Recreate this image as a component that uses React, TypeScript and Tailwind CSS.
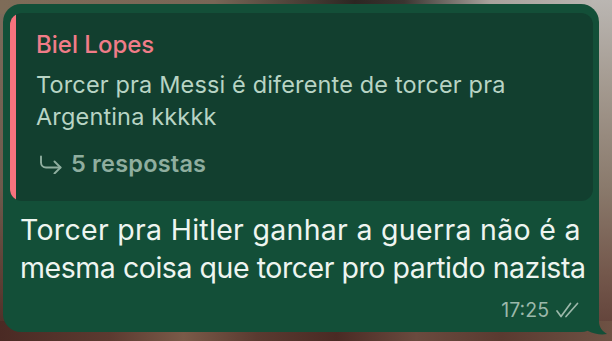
import React from 'react'

function ReplyArrow() {
  return (
    <svg width="23" height="19" viewBox="0 0 23 19" fill="none" stroke="currentColor" strokeWidth="1.9" strokeLinecap="round" strokeLinejoin="round">
      <path d="M2 1.5v6a5 5 0 0 0 5 5h14.5" />
      <path d="M15.5 6.5l6 6-6 6" />
    </svg>
  )
}

function DoubleCheck() {
  return (
    <svg width="25" height="16" viewBox="0 0 25 16" fill="none" stroke="currentColor" strokeWidth="1.7" strokeLinecap="round" strokeLinejoin="round">
      <path d="M2 9l4 5.5L15.5 1.5" />
      <path d="M11 14.5 22.5 1.5" />
    </svg>
  )
}

export default function App() {
  return (
    <div className="relative w-[612px] h-[341px] overflow-hidden bg-[linear-gradient(180deg,#7c6c5c_0%,#6e5a4c_55%,#5a3c32_85%,#4a2a24_100%)] font-['Inter',sans-serif]">
      {/* blurred wallpaper behind the bubble */}
      <div className="absolute inset-x-0 top-0 h-[14px] bg-[linear-gradient(90deg,#7e6c58_0%,#786656_35%,#2c2622_58%,#3a3430_66%,#a8a29c_80%,#bcb8b4_100%)]" />
      <div className="absolute right-0 top-0 h-[341px] w-[20px] bg-[linear-gradient(180deg,#bab6b2_0%,#a49a90_25%,#8a7a6c_55%,#74584c_80%,#5e3e36_100%)]" />
      <div className="absolute inset-x-0 bottom-0 h-[20px] bg-[linear-gradient(90deg,#4a2a24_0%,#5c3a30_18%,#7a5a48_30%,#5a3a30_42%,#4a2a24_55%,#6a4a3e_68%,#5a3a30_82%,#6e5244_100%)]" />

      <div className="relative ml-[3px] mt-[4px] w-[596px] rounded-[18px] bg-[#134f38] pl-[7px] pr-[6px] pt-[9px] pb-[12px]">
        <div className="flex rounded-[12px] overflow-hidden bg-[#123f2f]">
          <div className="w-[6px] shrink-0 bg-[#f7737e]" />
          <div className="flex-1 pl-[20px] pt-[18px] pb-[23px]">
            <div className="text-[24px] leading-[28px] font-medium text-[#f07c88]">Biel Lopes</div>
            <div className="mt-[10px] text-[23.5px] leading-[32px] tracking-[0.15px] text-[#b8d4c4]">
              Torcer pra Messi é diferente de torcer pra<br />Argentina kkkkk
            </div>
            <div className="mt-[17px] flex items-center gap-[9px] pl-[3px] text-[#8fae9f]">
              <ReplyArrow />
              <span className="text-[23.5px] leading-[28px] tracking-[0.2px] font-semibold">5 respostas</span>
            </div>
          </div>
        </div>
        <div className="pl-[10px] pt-[10px] text-[28.5px] leading-[38px] whitespace-nowrap text-[#eef5f0]">
          <div className="tracking-[0.3px]">Torcer pra Hitler ganhar a guerra não é a</div>
          <div className="tracking-[-0.45px]">mesma coisa que torcer pro partido nazista</div>
        </div>
        <div className="mt-[13px] flex items-center justify-end gap-[6px] pr-[13px] text-[#9cb8aa]">
          <span className="text-[19.5px] leading-[20px]">17:25</span>
          <DoubleCheck />
        </div>
      </div>
      <svg className="absolute left-[588px] top-[309px]" width="22" height="26" viewBox="0 0 22 26">
        <path d="M0 0h11v12c0 6 3 10 8 13-6 1-13 0-19-3z" fill="#134f38" />
      </svg>
    </div>
  )
}
